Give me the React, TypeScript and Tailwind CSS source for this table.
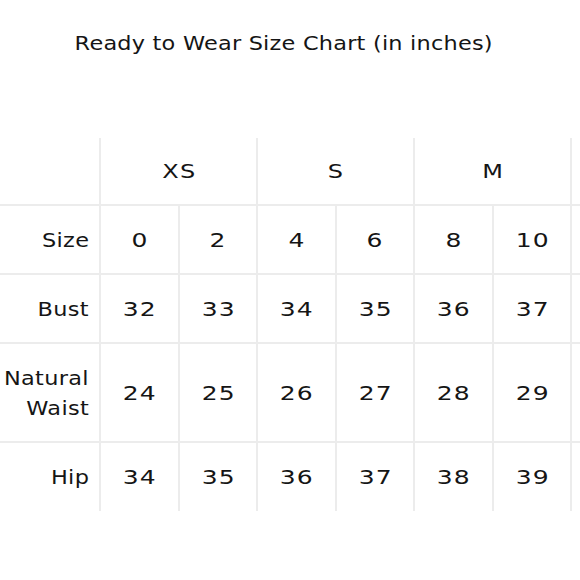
import React from "react";

const sizes = ["XS", "S", "M", ""];

const rows: { label: string[]; values: string[]; h: string }[] = [
  { label: ["Size"], values: ["0", "2", "4", "6", "8", "10", "", ""], h: "h-[67px]" },
  { label: ["Bust"], values: ["32", "33", "34", "35", "36", "37", "", ""], h: "h-[67px]" },
  { label: ["Natural", "Waist"], values: ["24", "25", "26", "27", "28", "29", "", ""], h: "h-[97px]" },
  { label: ["Hip"], values: ["34", "35", "36", "37", "38", "39", "", ""], h: "h-[68px]" },
];

export default function App() {
  return (
    <div
      className="w-[580px] h-[580px] overflow-hidden bg-white text-[#151515]"
      style={{ fontFamily: '"DejaVu Sans", sans-serif' }}
    >
      <div className="pt-[29px] pr-[12px] flex justify-center text-[20px] leading-[28px]">
        <span className="inline-block scale-x-[1.12] tracking-[0.2px]">
          Ready to Wear Size Chart (in inches)
        </span>
      </div>
      <div className="mt-[81px] w-[800px]">
        <div className="grid grid-cols-[99px_repeat(8,76.5px)] gap-[2px] bg-[#ececec] w-max">
          <div className="bg-white h-[66px]" />
          {sizes.map((s, i) => (
            <div
              key={i}
              className="col-span-2 bg-white h-[66px] flex items-center justify-center text-[20px]"
            >
              <span className="inline-block scale-x-[1.2] tracking-[1px] pl-[1px]">{s}</span>
            </div>
          ))}
          {rows.map((r) => (
            <React.Fragment key={r.label.join(" ")}>
              <div
                className={`bg-white ${r.h} flex flex-col items-end justify-center pr-[10px] text-[20px] leading-[30px]`}
              >
                {r.label.map((l) => (
                  <span key={l} className="inline-block origin-right scale-x-[1.12] tracking-[0.3px]">
                    {l}
                  </span>
                ))}
              </div>
              {r.values.map((v, i) => (
                <div
                  key={i}
                  className={`bg-white ${r.h} flex items-center justify-center text-[20px]`}
                >
                  <span className="inline-block scale-x-[1.25] tracking-[1px] pl-[1px]">{v}</span>
                </div>
              ))}
            </React.Fragment>
          ))}
        </div>
      </div>
    </div>
  );
}
